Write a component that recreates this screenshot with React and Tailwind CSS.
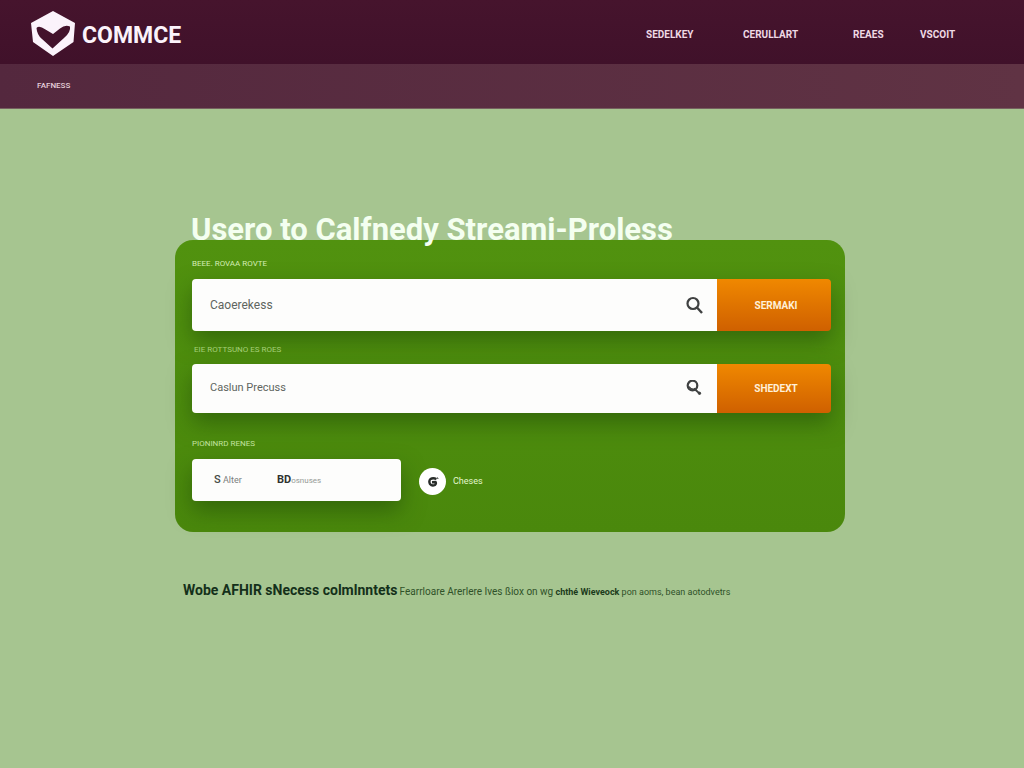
import { useState } from 'react';

const navLinks = [
    { label: 'SEDELKEY', className: 'w-[49px]' },
    { label: 'CERULLART', className: 'ml-12 w-[59px]' },
    { label: 'REAES', className: 'ml-[51px] w-8' },
    { label: 'VSCOIT', className: 'ml-[35px] w-8' },
];

const Logo = () => (
    <svg viewBox="0 0 44 46" className="w-11 h-[46px]" aria-hidden="true">
        <path
            fill="#fbf3fb"
            fillRule="evenodd"
            d="M22 0 L44 12 L42.5 31 L22 45 L2 31 L0 12 Z M5.5 17 Q6 24 11 28 L21.5 37.5 L33 27 Q40 21 39 15.5 Q34 13.5 29 17.5 L22 23 L14.5 18.5 Q8 14 5.5 17 Z"
        />
    </svg>
);

const SearchIcon = ({ variant }) => (
    <svg viewBox="0 0 18 18" className="w-[18px] h-[18px]" fill="none" stroke="#3f4141" aria-hidden="true">
        {variant === 'knob' ? (
            <>
                <circle cx="6.5" cy="5.5" r="4.8" strokeWidth="2.2" />
                <path d="M8 8.5 L13 13" strokeWidth="1.8" />
                <circle cx="13.5" cy="13.3" r="1.2" fill="#3f4141" strokeWidth="1" />
                <path d="M3 6.5 Q5 10 9 9" strokeWidth="1.4" />
            </>
        ) : (
            <>
                <circle cx="7" cy="7.5" r="5.5" strokeWidth="2.2" />
                <path d="M11 11.5 L16 17" strokeWidth="2.4" />
            </>
        )}
    </svg>
);

const SearchRow = ({ id, label, placeholder, button, variant, rowClass, labelClass, inputClass }) => {
    const [value, setValue] = useState('');

    return (
        <div>
            <label htmlFor={id} className={`block text-[8px] leading-3 ${labelClass}`}>{label}</label>
            <div className={`flex rounded shadow-[0_10px_22px_rgba(28,70,8,0.5)] ${rowClass}`}>
                <div className="flex flex-1 items-center bg-[#fdfdfc] rounded-l pl-[18px] pr-[13px]">
                    <input
                        id={id}
                        value={value}
                        onChange={(e) => setValue(e.target.value)}
                        placeholder={placeholder}
                        className={`flex-1 min-w-0 bg-transparent text-[#555b56] placeholder:text-[#5f6560] outline-none ${inputClass}`}
                    />
                    <SearchIcon variant={variant} />
                </div>
                <button
                    type="submit"
                    className="w-[114px] rounded-r bg-linear-to-b from-[#f08800] to-[#cf6000] text-[10px] font-bold text-[#fff0d8] pl-1"
                >
                    {button}
                </button>
            </div>
        </div>
    );
};

const App = () => {
    return (
        <div className="min-h-screen bg-[#a6c590] font-['Roboto','Liberation_Sans',sans-serif]">
            <header>
                <div className="flex items-center justify-between h-16 pl-[31px] pr-[72px] bg-linear-to-b from-[#46142d] to-[#40112a]">
                    <a href="#" className="flex items-center gap-[7px] pt-1">
                        <Logo />
                        <span className="text-[23px] leading-7 font-bold text-[#fbf3fb] pt-[3px]">COMMCE</span>
                    </a>
                    <nav className="flex items-center pt-[6px] text-[10px] leading-4 font-bold text-[#efd9e5] whitespace-nowrap">
                        {navLinks.map((link) => (
                            <a key={link.label} href="#" className={link.className}>{link.label}</a>
                        ))}
                    </nav>
                </div>
                <div className="flex items-center h-[45px] px-[37px] bg-linear-to-r from-[#54283e] to-[#603344] border-b border-[#76605f]">
                    <a href="#" className="text-[8px] leading-3 font-medium text-[#e6cfda]">FAFNESS</a>
                </div>
            </header>

            <main className="pt-[99px] pr-1">
                <div className="max-w-[670px] mx-auto">
                    {/* Title runs over the top edge of the card */}
                    <h1 className="relative z-10 pl-4 -mb-3 text-[31px] leading-[44px] font-bold text-[#f4fff0] whitespace-nowrap">
                        Usero to Calfnedy Streami-Proless
                    </h1>
                    <form
                        onSubmit={(e) => e.preventDefault()}
                        className="rounded-[18px] bg-linear-to-b from-[#51920f] to-[#4a880c] pt-[18px] pl-[17px] pr-[14px] pb-[31px]"
                    >
                        <SearchRow
                            id="primary"
                            label="BEEE. ROVAA ROVTE"
                            placeholder="Caoerekess"
                            button="SERMAKI"
                            labelClass="text-[#d3edb4]"
                            inputClass="text-xs"
                            rowClass="mt-[9px] h-[52px]"
                        />
                        <div className="mt-[13px]">
                            <SearchRow
                                id="secondary"
                                label="EIE ROTTSUNO ES ROES"
                                placeholder="Caslun Precuss"
                                button="SHEDEXT"
                                variant="knob"
                                labelClass="text-[#a5cf78] pl-[2px]"
                                inputClass="text-[11px]"
                                rowClass="mt-2 h-[49px]"
                            />
                        </div>
                        <p className="mt-[25px] text-[8px] leading-3 text-[#c3e3a0]">PIONINRD RENES</p>
                        <div className="flex items-center mt-[9px]">
                            <div className="flex items-center w-[209px] h-[42px] rounded bg-[#fdfdfc] pl-[22px] shadow-[0_10px_22px_rgba(28,70,8,0.5)]">
                                <button type="button" className="w-[63px] text-left text-[9px] text-[#7b807c]">
                                    <span className="text-[11px] font-medium text-[#454a46]">S</span> Alter
                                </button>
                                <button type="button" className="text-left text-[8px] text-[#959a96]">
                                    <span className="text-[11px] font-bold text-[#2f3330]">BD</span>osnuses
                                </button>
                            </div>
                            <button type="button" className="flex items-center gap-[7px] ml-[18px] pt-[3px] text-[9px] text-[#e3f6cd]">
                                <span className="flex items-center justify-center w-[27px] h-[27px] rounded-full bg-white">
                                    <svg viewBox="0 0 12 12" className="w-3 h-3" fill="none" stroke="#292d2a" aria-hidden="true">
                                        <path d="M9.5 3 Q6 1.5 3.5 3 Q1.5 5 3 8 Q5 10.5 8 9 Q9.5 7.5 8.5 6 L5 6.2" strokeWidth="2.4" />
                                        <path d="M10.5 1.5 L11 3" strokeWidth="1" />
                                    </svg>
                                </span>
                                <span>Cheses</span>
                            </button>
                        </div>
                    </form>
                    <p className="mt-12 pl-2 leading-6 text-[9px] text-[#2f5128] whitespace-nowrap">
                        <strong className="text-sm font-bold text-[#14301a]">Wobe AFHIR sNecess colmlnntets</strong>{' '}
                        <span className="text-[10px]">Fearrloare Arerlere Ives ßiox on wg</span>{' '}
                        <strong className="font-bold text-[#1c3b1b]">chthé Wieveock</strong> pon aoms, bean aotodvetrs
                    </p>
                </div>
            </main>
        </div>
    );
};

export default App;
